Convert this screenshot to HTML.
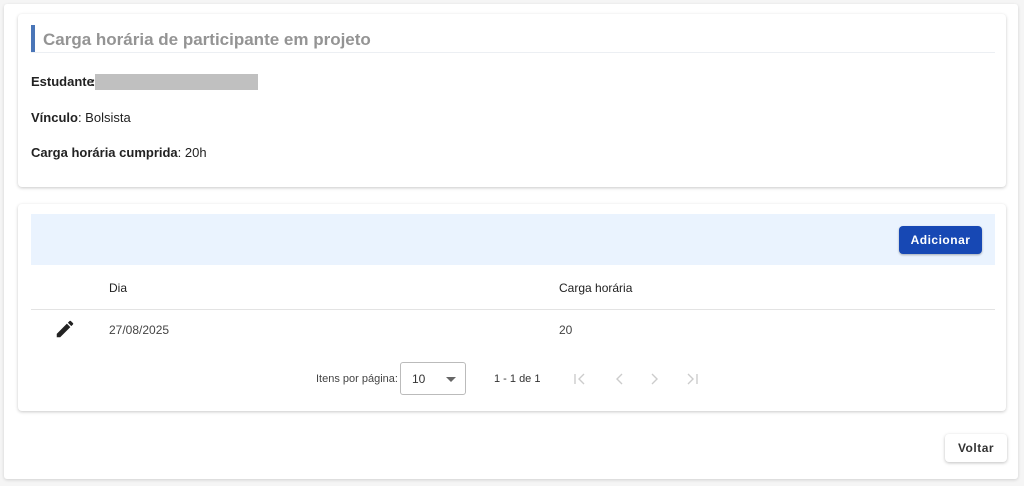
<!DOCTYPE html>
<html><head><meta charset="utf-8"><style>
*{box-sizing:border-box;margin:0;padding:0}
body{width:1024px;height:486px;background:#f5f5f5;font-family:"Liberation Sans",sans-serif;color:#222;position:relative;overflow:hidden}
.abs{position:absolute}
.outer{left:4px;top:4px;width:1014px;height:475px;background:#fff;box-shadow:0 1px 3px rgba(0,0,0,.15);border-radius:3px}
.card{background:#fff;box-shadow:0 1px 3px rgba(0,0,0,.22);border-radius:4px}
.t{font-size:13px;white-space:nowrap}
</style></head><body>
<div class="abs outer"></div>
<div class="abs card" style="left:18px;top:14px;width:988px;height:173px"></div>
<div class="abs" style="left:31px;top:25px;width:4px;height:27px;background:#4a76b8"></div>
<div class="abs" style="left:31px;top:52px;width:964px;height:1px;background:#eceff3"></div>
<div class="abs" style="left:43px;top:30px;font-size:17px;font-weight:bold;color:#949494;white-space:nowrap">Carga horária de participante em projeto</div>
<div class="abs t" style="left:31px;top:74px"><b>Estudante</b></div>
<div class="abs t" style="left:91px;top:74px"><b>:</b></div>
<div class="abs" style="left:95px;top:74px;width:163px;height:16px;background:#c0c0c0"></div>
<div class="abs t" style="left:31px;top:110px"><b>Vínculo</b>: Bolsista</div>
<div class="abs t" style="left:31px;top:145px"><b>Carga horária cumprida</b>: 20h</div>

<div class="abs card" style="left:18px;top:204px;width:988px;height:207px"></div>
<div class="abs" style="left:31px;top:214px;width:964px;height:51px;background:#eaf3fe"></div>
<div class="abs" style="left:899px;top:226px;width:83px;height:28px;background:#1748b4;border-radius:4px;box-shadow:0 1px 2px rgba(0,0,0,.3);color:#fff;font-size:12px;font-weight:bold;letter-spacing:.5px;text-align:center;line-height:28px">Adicionar</div>
<div class="abs" style="left:109px;top:281px;font-size:12px;color:#222">Dia</div>
<div class="abs" style="left:559px;top:281px;font-size:12px;color:#222">Carga horária</div>
<div class="abs" style="left:31px;top:309px;width:964px;height:1px;background:#e3e3e3"></div>
<svg class="abs" style="left:54px;top:318px" width="22" height="22" viewBox="0 0 24 24"><path fill="#222" d="M3 17.25V21h3.75L17.81 9.94l-3.75-3.75L3 17.25zM20.71 7.04a1 1 0 0 0 0-1.41l-2.34-2.34a1 1 0 0 0-1.41 0l-1.83 1.83 3.75 3.75 1.83-1.83z"/></svg>
<div class="abs" style="left:109px;top:323px;font-size:12px;color:#444">27/08/2025</div>
<div class="abs" style="left:559px;top:323px;font-size:12px;color:#444">20</div>
<div class="abs" style="left:316px;top:373px;font-size:11px;color:#444">Itens por página:</div>
<div class="abs" style="left:400px;top:362px;width:66px;height:33px;border:1px solid #bbb;border-radius:3px"></div>
<div class="abs" style="left:412px;top:372px;font-size:12px;color:#333">10</div>
<div class="abs" style="left:446px;top:377px;width:0;height:0;border-left:5px solid transparent;border-right:5px solid transparent;border-top:5px solid #666"></div>
<div class="abs" style="left:494px;top:373px;font-size:11px;color:#333">1 - 1 de 1</div>
<svg class="abs" style="left:570px;top:370px" width="140" height="18" viewBox="0 0 140 18" fill="none" stroke="#ccc" stroke-width="1.4">
<path d="M5 4v10M14 4l-5 5 5 5"/><path d="M52 4l-5 5 5 5"/><path d="M82 4l5 5-5 5"/><path d="M118 4l5 5-5 5M127 4v10"/></svg>

<div class="abs" style="left:945px;top:434px;width:62px;height:28px;background:#fff;border-radius:4px;box-shadow:0 1px 3px rgba(0,0,0,.25);font-size:12px;font-weight:bold;letter-spacing:.5px;color:#333;text-align:center;line-height:28px">Voltar</div>
</body></html>
